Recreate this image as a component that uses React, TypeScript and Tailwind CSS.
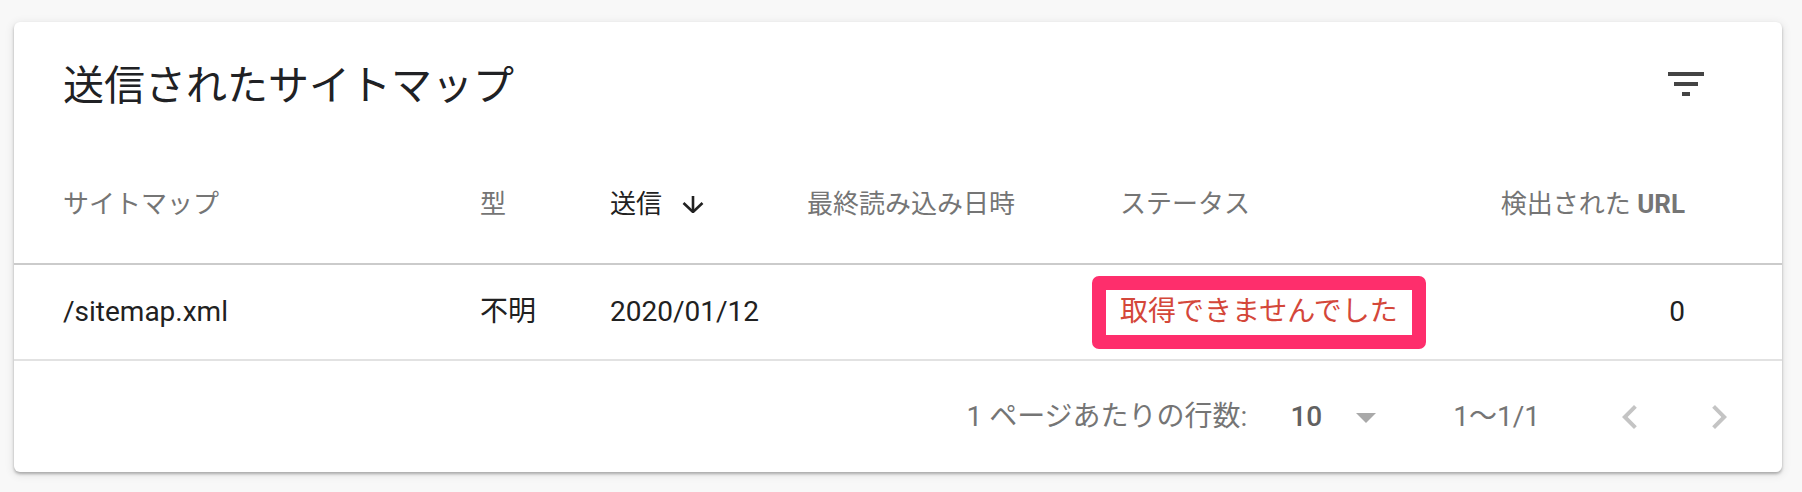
import React from 'react';

const FONT = "font-['Roboto','Noto_Sans_CJK_JP',sans-serif]";

const FilterIcon = () => (
  <svg viewBox="0 0 24 24" className="w-12 h-12" fill="#444444">
    <path d="M10 18h4v-2h-4v2zM3 6v2h18V6H3zm3 7h12v-2H6v2z" />
  </svg>
);

const SortArrow = () => (
  <svg viewBox="0 0 22 17" className="w-[22px] h-[17px]" fill="none" stroke="#212121" strokeWidth="2.6">
    <path d="M11 0v15.5" />
    <path d="M1.5 7l9.5 9 9.5-9" />
  </svg>
);

const Chevron = ({ dir }: { dir: 'left' | 'right' }) => (
  <div className="w-12 h-12 flex items-center justify-center">
    <svg viewBox="0 0 24 24" className="w-12 h-12" fill="#c4c4c4">
      {dir === 'left' ? (
        <path d="M15.41 7.41L14 6l-6 6 6 6 1.41-1.41L10.83 12z" />
      ) : (
        <path d="M10 6L8.59 7.41 13.17 12l-4.58 4.59L10 18l6-6z" />
      )}
    </svg>
  </div>
);

const cols = 'grid grid-cols-[417px_130px_197px_313px_1fr_auto] items-center pl-[49px] pr-[97px]';

const SitemapTable = () => {
  const rows = [
    { path: '/sitemap.xml', type: '不明', sent: '2020/01/12', lastRead: '', status: '取得できませんでした', urls: 0 }
  ];

  return (
    <div className={`min-h-screen bg-[#f8f8f8] pt-[22px] pl-[14px] ${FONT}`}>
      <div className="w-[1768px] bg-white rounded-[6px] shadow-[0_2px_3px_rgba(0,0,0,0.28),0_2px_8px_2px_rgba(0,0,0,0.07)]">
        {/* title */}
        <div className="h-[124px] flex items-center justify-between pl-[49px] pr-[72px]">
          <h2 className="pt-[5px] text-[41px] text-[#202124] font-normal">送信されたサイトマップ</h2>
          <FilterIcon />
        </div>

        {/* column headers */}
        <div className={`${cols} h-[119px] border-b-2 border-[#cbcbcb] text-[26px] text-[#757575]`}>
          <div>サイトマップ</div>
          <div>型</div>
          <div className="flex items-center gap-[20px] text-[#212121]">
            <span>送信</span>
            <SortArrow />
          </div>
          <div>最終読み込み日時</div>
          <div>ステータス</div>
          <div className="text-right">
            検出された <span className="font-bold">URL</span>
          </div>
        </div>

        {/* rows */}
        {rows.map((row, i) => (
          <div key={i} className={`${cols} h-[96px] border-b-2 border-[#e2e2e2] text-[28px] text-[#212121]`}>
            <div>{row.path}</div>
            <div>{row.type}</div>
            <div>{row.sent}</div>
            <div>{row.lastRead}</div>
            <div>
              <div className="inline-flex items-center h-[73px] -ml-[28px] px-[14px] border-[14px] border-[#fe2e6c] rounded-[7px] text-[#d4473a]">
                {row.status}
              </div>
            </div>
            <div className="text-right">{row.urls}</div>
          </div>
        ))}

        {/* pagination */}
        <div className="h-[111px] flex items-center justify-end pr-[39px] text-[28px] text-[#757575]">
          <span>1 ページあたりの行数:</span>
          <span className="ml-[43px] font-medium text-[#616161]">10</span>
          <svg viewBox="0 0 24 24" className="ml-[20px] w-12 h-12" fill="#a9a9a9">
            <path d="M7 10l5 5 5-5z" />
          </svg>
          <span className="ml-[63px]">1〜1/1</span>
          <div className="ml-[66px] flex items-center gap-[41px]">
            <Chevron dir="left" />
            <Chevron dir="right" />
          </div>
        </div>
      </div>
    </div>
  );
};

export default function App() {
  return <SitemapTable />;
}
